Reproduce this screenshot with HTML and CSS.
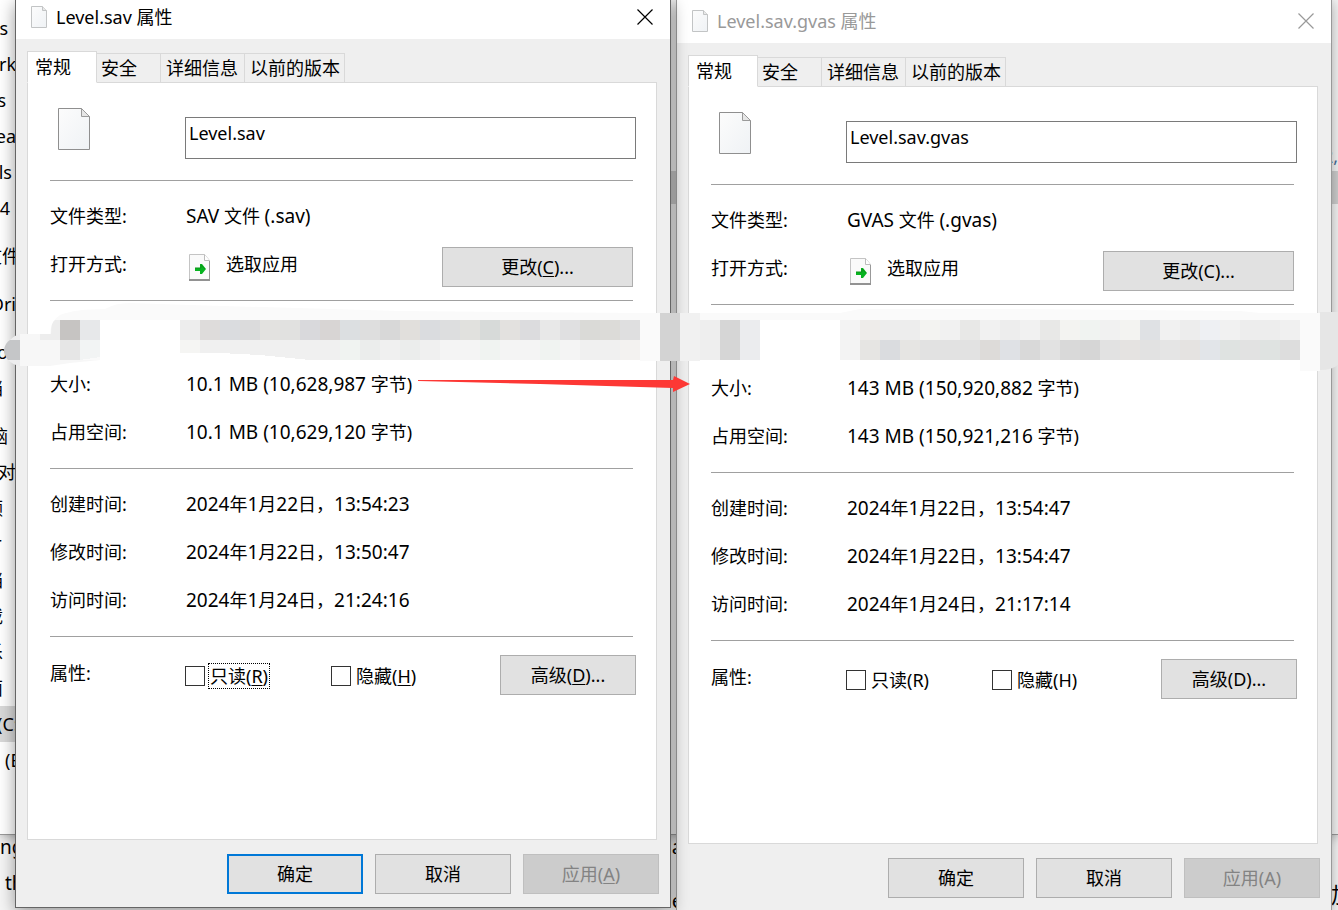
FILE: index.html
```html
<!DOCTYPE html>
<html lang="zh-CN">
<head>
<meta charset="utf-8">
<title>Level.sav 属性</title>
<link rel="stylesheet" href="styles.css">
</head>
<body>
<svg class="defs" aria-hidden="true">
  <defs>
    <linearGradient id="paper" x1="0" y1="0" x2="1" y2="1"><stop offset="0" stop-color="#fcfcfc"/><stop offset="1" stop-color="#eff2f5"/></linearGradient>
    <symbol id="file-small" viewBox="0 0 16 22"><path d="M.5.5H11.500L15.500 4.500V21.500H.5Z" fill="url(#paper)" stroke="#c2c4c5"/><path d="M11.500.5V4.500H15.500" fill="#e8e8e8" stroke="#c2c4c5"/></symbol>
    <symbol id="file-large" viewBox="0 0 32 42"><path d="M.5.5H23.500L31.500 8.500V41.500H.5Z" fill="url(#paper)" stroke="#8f8f8f"/><path d="M23.500.5V8.500H31.500Z" fill="#e6e6e6" stroke="#9a9a9a"/></symbol>
    <symbol id="file-open" viewBox="0 0 22 28"><path d="M.5.5H15.500L20.500 6.500V26.500H.5Z" fill="#fafafa" stroke="#c4c4c4"/><path d="M15.500.5V6.500H20.500" fill="#fff" stroke="#bcbcbc"/><path d="M20.500 7V26" stroke="#999"/><path d="M0 26H21" stroke="#929292" stroke-width="2"/><path d="M6 14H11V10H13L17 15L13 20H11V17H6Z" fill="#06b31f"/><path d="M6 14H12V11L16 15" fill="none" stroke="#0a9418"/></symbol>
    <symbol id="close" viewBox="0 0 16 16"><path d="M.5.5L15.500 15.500M15.500.5L.5 15.500" fill="none" stroke="currentColor" stroke-width="1.200"/></symbol>
  </defs>
</svg>
<div class="desktop">
  <div class="behind">
    <div class="explorer">
      <ul class="tree">
        <li class="end-8">s</li><li class="end-16">rk</li><li class="end-6">s</li><li class="end-16">ea</li><li class="end-12">ls</li><li class="end-10">4</li>
        <li class="end-20 gap">文件</li><li class="end-16 gap">Dri</li><li class="end-8 gap">o</li><li class="end-3">档</li>
        <li class="end-8 gap">脑</li><li class="end-34">对象</li><li class="end-3">频</li><li class="end-3">片</li><li class="end-3">档</li><li class="end-3">载</li><li class="end-3">乐</li><li class="end-3">面</li>
        <li class="drive">(C:)</li><li class="drive-next">(E:)</li>
      </ul>
      <div class="scroll-thumb"></div>
      <span class="edge-mark">2,</span>
    </div>
    <div class="page">
      <div class="page-left"><span class="ng">ng</span><span class="th">th</span></div>
      <div class="page-mid"><span>a</span><span>e</span></div>
      <div class="page-right"><span>加</span></div>
    </div>
  </div>

  <section class="window active">
    <header class="titlebar">
      <svg class="title-icon"><use href="#file-small"/></svg>
      <h1>Level.sav 属性</h1>
      <button class="close" aria-label="关闭"><svg><use href="#close"/></svg></button>
    </header>
    <nav class="tabs"><button class="tab current">常规</button><button class="tab second">安全</button><button class="tab third">详细信息</button><button class="tab fourth">以前的版本</button></nav>
    <div class="panel">
      <div class="name-row"><svg class="file-icon"><use href="#file-large"/></svg><input class="name" type="text" value="Level.sav" aria-label="文件名"></div>
      <dl class="group">
        <div class="row"><dt>文件类型:</dt><dd><span class="lat">SAV</span> 文件 <span class="lat">(.sav)</span></dd></div>
        <div class="row"><dt>打开方式:</dt><dd class="opener"><svg class="open-icon"><use href="#file-open"/></svg><span>选取应用</span><button class="btn change">更改(<u>C</u>)...</button></dd></div>
      </dl>
      <dl class="group">
        <div class="row"></div>
        <div class="row"><dt>大小:</dt><dd><span class="lat">10.1 MB (10,628,987</span> 字节)</dd></div>
        <div class="row"><dt>占用空间:</dt><dd><span class="lat">10.1 MB (10,629,120</span> 字节)</dd></div>
      </dl>
      <dl class="group">
        <div class="row"><dt>创建时间:</dt><dd><span class="lat">2024</span>年<span class="lat">1</span>月<span class="lat">22</span>日，<span class="lat">13:54:23</span></dd></div>
        <div class="row"><dt>修改时间:</dt><dd><span class="lat">2024</span>年<span class="lat">1</span>月<span class="lat">22</span>日，<span class="lat">13:50:47</span></dd></div>
        <div class="row"><dt>访问时间:</dt><dd><span class="lat">2024</span>年<span class="lat">1</span>月<span class="lat">24</span>日，<span class="lat">21:24:16</span></dd></div>
      </dl>
      <div class="attributes">
        <span class="attr-title">属性:</span>
        <label class="check"><input type="checkbox"><span class="focused">只读(<u>R</u>)</span></label>
        <label class="check"><input type="checkbox"><span>隐藏(<u>H</u>)</span></label>
        <button class="btn advanced">高级(<u>D</u>)...</button>
      </div>
    </div>
    <footer class="actions"><button class="btn primary">确定</button><button class="btn">取消</button><button class="btn" disabled>应用(<u>A</u>)</button></footer>
  </section>

  <section class="window inactive">
    <header class="titlebar">
      <svg class="title-icon"><use href="#file-small"/></svg>
      <h1>Level.sav.gvas 属性</h1>
      <button class="close" aria-label="关闭"><svg><use href="#close"/></svg></button>
    </header>
    <nav class="tabs"><button class="tab current">常规</button><button class="tab second">安全</button><button class="tab third">详细信息</button><button class="tab fourth">以前的版本</button></nav>
    <div class="panel">
      <div class="name-row"><svg class="file-icon"><use href="#file-large"/></svg><input class="name" type="text" value="Level.sav.gvas" aria-label="文件名"></div>
      <dl class="group">
        <div class="row"><dt>文件类型:</dt><dd><span class="lat">GVAS</span> 文件 <span class="lat">(.gvas)</span></dd></div>
        <div class="row"><dt>打开方式:</dt><dd class="opener"><svg class="open-icon"><use href="#file-open"/></svg><span>选取应用</span><button class="btn change">更改(C)...</button></dd></div>
      </dl>
      <dl class="group">
        <div class="row"></div>
        <div class="row"><dt>大小:</dt><dd><span class="lat">143 MB (150,920,882</span> 字节)</dd></div>
        <div class="row"><dt>占用空间:</dt><dd><span class="lat">143 MB (150,921,216</span> 字节)</dd></div>
      </dl>
      <dl class="group">
        <div class="row"><dt>创建时间:</dt><dd><span class="lat">2024</span>年<span class="lat">1</span>月<span class="lat">22</span>日，<span class="lat">13:54:47</span></dd></div>
        <div class="row"><dt>修改时间:</dt><dd><span class="lat">2024</span>年<span class="lat">1</span>月<span class="lat">22</span>日，<span class="lat">13:54:47</span></dd></div>
        <div class="row"><dt>访问时间:</dt><dd><span class="lat">2024</span>年<span class="lat">1</span>月<span class="lat">24</span>日，<span class="lat">21:17:14</span></dd></div>
      </dl>
      <div class="attributes">
        <span class="attr-title">属性:</span>
        <label class="check"><input type="checkbox"><span>只读(R)</span></label>
        <label class="check"><input type="checkbox"><span>隐藏(H)</span></label>
        <button class="btn advanced">高级(D)...</button>
      </div>
    </div>
    <footer class="actions"><button class="btn">确定</button><button class="btn">取消</button><button class="btn" disabled>应用(A)</button></footer>
  </section>

  <svg class="markup" viewBox="0 300 1338 100" preserveAspectRatio="none" aria-hidden="true">
    <path d="M50 334Q51 320 60 315Q75 309 105 309Q115 303 130 303L190 305L400 311L640 313H840L860 309H1010L1240 311L1260 313H1338V320H640V360H180V320H100V360H50Z" fill="#fafafa"/>
    <path d="M20 334H60V360H100Q75 362 50 366H20Z" fill="#f7f7f7"/>
    <path d="M20 340V360H8Q4 355 4 350Q5 343 10 340Z" fill="#c5c6c8"/>
    <path d="M10 340Q15 335 20 334V340ZM8 360H20V366Q13 365 8 360Z" fill="#ededee"/>
    <path d="M51 334Q51 322 55 320H60V340H40V334Z" fill="#ededed"/>
    <g shape-rendering="crispEdges">
      <path d="M60 320h20v20h-20z" fill="#c6c4c2"/><path d="M80 320h20v20h-20z" fill="#e7e8ea"/><path d="M60 340h20v20h-20z" fill="#e6e6e6"/><path d="M80 340h20v17l-20 3z" fill="#f2f4f4"/>
      <path d="M100 320h80v40h-80z" fill="#fff"/>
      <path d="M180 320h20v20h-20z" fill="#ededed"/><path d="M200 320h20v20h-20z" fill="#dedcdb"/><path d="M220 320h20v20h-20z" fill="#dadcdf"/><path d="M240 320h20v20h-20z" fill="#dbdbdc"/><path d="M260 320h20v20h-20z" fill="#e3e2e0"/><path d="M280 320h20v20h-20z" fill="#e1e1e0"/><path d="M300 320h20v20h-20z" fill="#d9d9dc"/><path d="M320 320h20v20h-20z" fill="#d8d5d4"/><path d="M340 320h20v20h-20z" fill="#dcdfe1"/><path d="M360 320h20v20h-20z" fill="#dedede"/><path d="M380 320h20v20h-20z" fill="#d8d8d8"/><path d="M400 320h20v20h-20z" fill="#e1dfdc"/><path d="M420 320h20v20h-20z" fill="#dadcdf"/><path d="M440 320h20v20h-20z" fill="#dddedf"/><path d="M460 320h20v20h-20z" fill="#e1e1de"/><path d="M480 320h20v20h-20z" fill="#d7dad9"/><path d="M500 320h20v20h-20z" fill="#e3e1df"/><path d="M520 320h20v20h-20z" fill="#dcdcde"/><path d="M540 320h20v20h-20z" fill="#e8e8e8"/><path d="M560 320h20v20h-20z" fill="#e0e0e1"/><path d="M580 320h20v20h-20z" fill="#dadad7"/><path d="M600 320h20v20h-20z" fill="#dcdbd8"/><path d="M620 320h20v20h-20z" fill="#dfdfe0"/>
      <path d="M180 340h460v20H310L260 355L220 353H180Z" fill="#f0f0f0"/><path d="M180 340h20v13h-20z" fill="#f5f5f3"/><path d="M340 340h20v20h-20zM480 340h20v20h-20zM540 340h20v20h-20z" fill="#f0f3f1"/><path d="M360 340h20v20h-20zM400 340h20v20h-20z" fill="#ebedec"/><path d="M440 340h40v20h-40zM500 340h40v20h-40zM560 340h20v20h-20z" fill="#f4f4f4"/><path d="M620 340h20v20h-20z" fill="#f3f2f0"/>
      <path d="M180 353L220 353L260 355L310 360H180Z" fill="#fff"/>
      <path d="M640 313h20v48h-20z" fill="#fafafa"/><path d="M660 313h20v48h-20z" fill="#d3d3d3"/><path d="M680 313h20v48h-20z" fill="#f1f1f1"/><path d="M700 320h20v40h-20z" fill="#eee"/><path d="M720 320h20v40h-20z" fill="#d6d6d6"/><path d="M740 320h20v40h-20z" fill="#ebecee"/><path d="M760 320h80v40h-80z" fill="#fff"/>
      <path d="M840 320h20v40h-20z" fill="#f3f3f3"/><path d="M860 320h440v20H860z" fill="#ededed"/><path d="M860 340h440v20H860z" fill="#e2e2e2"/>
      <path d="M860 320h20v20h-20z" fill="#eeecea"/><path d="M920 320h20v20h-20zM1060 320h20v20h-20zM1120 320h20v20h-20z" fill="#f3f3f1"/><path d="M940 320h20v20h-20zM980 320h20v20h-20zM1020 320h20v20h-20zM1100 320h20v20h-20zM1160 320h20v20h-20zM1220 320h20v20h-20z" fill="#f1f1f1"/><path d="M960 320h20v20h-20zM1040 320h20v20h-20z" fill="#e8e8e7"/><path d="M1080 320h20v20h-20z" fill="#f0f3f1"/><path d="M1140 320h20v20h-20z" fill="#dfe1e4"/><path d="M1200 320h20v20h-20z" fill="#eef0f3"/><path d="M1280 320h20v20h-20z" fill="#f0f0f0"/>
      <path d="M860 340h20v20h-20zM900 340h20v20h-20z" fill="#e6e5e3"/><path d="M880 340h20v20h-20z" fill="#dadcdf"/><path d="M980 340h20v20h-20z" fill="#dddbd9"/><path d="M1000 340h20v20h-20z" fill="#dfe1e5"/><path d="M1020 340h20v20h-20zM1060 340h20v20h-20z" fill="#d9d9d9"/><path d="M1080 340h20v20h-20z" fill="#d6d6d6"/><path d="M1120 340h20v20h-20zM1180 340h20v20h-20z" fill="#e5e3e1"/><path d="M1160 340h20v20h-20z" fill="#e5e5e5"/><path d="M1200 340h20v20h-20z" fill="#e2e5e9"/><path d="M1220 340h20v20h-20zM1260 340h20v20h-20z" fill="#dfe3e1"/><path d="M1280 340h20v20h-20z" fill="#ddd"/>
      <path d="M1300 313h20v58h-20z" fill="#fafafa"/>
    </g>
    <path d="M1320 312H1338V365Q1332 370 1320 370Z" fill="#e6e6e6"/>
    <path d="M418 380L673 380L674 376L690 384L673 392V388L540 384L418 381Z" fill="#fd3835"/>
  </svg>
</div>
</body>
</html>
```
FILE: styles.css
```css
* { box-sizing: border-box; }
body {
  margin: 0;
  color: #000;
  background: #fff;
  font: 18px/24px "Noto Sans", "Noto Sans CJK SC", sans-serif;
}
h1, dl, dd, ul { margin: 0; padding: 0; font: inherit; }
button, input { font: inherit; color: inherit; }
.defs { position: absolute; width: 0; height: 0; }
.lat { font-size: 19px; }

.desktop {
  position: relative;
  height: 100vh;
  min-height: 880px;
  overflow: hidden;
  display: grid;
  grid-template-columns: minmax(0, 1fr) minmax(0, 1fr);
  gap: 5px;
  padding: 0 6px 0 15px;
  align-items: start;
}

/* Windows lying behind the two dialogs */
.behind { position: absolute; inset: 0; display: flex; flex-direction: column; background: #f5f5f5; }
.explorer {
  position: relative;
  flex: none;
  height: 835px;
  background: linear-gradient(90deg, #fff 50%, #f3f3f3 50%);
  border-bottom: 1px solid #999;
  box-shadow: 0 0 12px rgba(0, 0, 0, .4);
}
.tree { list-style: none; padding-top: 10px; }
.tree li { display: flex; justify-content: flex-end; align-items: center; height: 36px; white-space: nowrap; }
.tree .gap { margin-top: 12px; }
.tree .end-3 { width: 3px; }
.tree .end-6 { width: 6px; }
.tree .end-8 { width: 8px; }
.tree .end-10 { width: 10px; }
.tree .end-12 { width: 12px; }
.tree .end-16 { width: 16px; }
.tree .end-20 { width: 20px; }
.tree .end-34 { width: 34px; }
.tree .drive { justify-content: flex-end; width: 24px; background: #d9d9d9; }
.tree .drive-next { justify-content: flex-start; padding-left: 5px; }
.scroll-thumb { position: absolute; left: 50%; right: 0; top: 171px; height: 33px; background: #cdcdcd; }
.edge-mark { position: absolute; right: 0; top: 144px; color: #456b95; }
.page { flex: 1; display: flex; justify-content: space-between; min-height: 0; font-size: 19px; }
.page-left { display: flex; flex-direction: column; gap: 12px; width: 24px; }
.page-left .th { padding-left: 5px; }
.page-mid { display: flex; flex-direction: column; gap: 30px; font-size: 20px; }
.page-right { width: 7px; padding-top: 47px; font-size: 22px; }

/* Property dialogs */
.window {
  position: relative;
  display: flex;
  flex-direction: column;
  height: calc(100vh - 2px);
  min-height: 860px;
  background: #efefef;
  border: 1px solid #656565;
  border-top: 0;
}
.active { z-index: 2; box-shadow: 0 4px 16px rgba(0, 0, 0, .4); }
.inactive { z-index: 1; height: calc(100vh + 2px); border-color: #999; box-shadow: 0 2px 12px rgba(0, 0, 0, .32); }
.titlebar { display: flex; align-items: center; height: 39px; padding: 0 17px 6px 15px; background: #fff; }
.inactive .titlebar { height: 43px; padding-top: 4px; color: #999; }
.title-icon { width: 16px; height: 22px; margin-right: 9px; }
.titlebar h1 { flex: 1; white-space: nowrap; }
.close { display: flex; padding: 0; border: 0; background: none; }
.close svg { width: 16px; height: 16px; }

.tabs { display: flex; align-items: flex-end; height: 44px; padding-left: 11px; position: relative; z-index: 1; }
.tab {
  height: 30px;
  padding: 0 0 0 5px;
  border: 1px solid #d9d9d9;
  border-left: 0;
  background: #efefef;
  text-align: left;
  white-space: nowrap;
}
.tab.current { width: 70px; height: 32px; padding-left: 7px; border-left: 1px solid #d9d9d9; border-bottom-color: #fff; background: #fff; }
.tab.second { width: 64px; padding-left: 4px; }
.tab.third { width: 84px; }
.tab.fourth { width: 100px; }
.panel {
  flex: 1;
  margin: -1px 13px 0 11px;
  padding: 0 20px 0 22px;
  border: 1px solid #d9d9d9;
  background: #fff;
}
.name-row { display: flex; align-items: flex-start; height: 97px; padding: 25px 0 0 8px; }
.file-icon { width: 32px; height: 42px; margin-right: 95px; flex: none; }
.name { flex: 1; min-width: 0; height: 42px; margin-top: 9px; padding: 0 3px 11px; border: 1px solid #7a7a7a; background: #fff; outline: 0; }
.group { margin-right: 3px; padding: 11px 0 12px; border-top: 1px solid #a0a0a0; }
.group:last-of-type { border-bottom: 1px solid #a0a0a0; }
.row { display: grid; grid-template-columns: 136px minmax(0, 1fr); align-items: center; height: 48px; white-space: nowrap; }
.opener { display: flex; align-items: center; }
.open-icon { width: 22px; height: 28px; margin: 8px 15px 0 3px; }
.btn { height: 40px; padding: 0; border: 1px solid #adadad; background: #e1e1e1; text-align: center; }
.btn u, .check u { text-underline-offset: 2px; }
.change { width: 191px; margin: 6px 0 0 auto; }
.attributes { display: flex; align-items: center; padding-top: 18px; }
.attr-title { width: 135px; padding-bottom: 4px; }
.check { display: flex; align-items: center; width: 146px; padding-top: 2px; white-space: nowrap; }
.check input { appearance: none; width: 20px; height: 20px; margin: 0 4px 0 0; border: 1px solid #333; background: #fff; }
.check span { padding: 0 1px; }
.focused { outline: 1px dotted #000; }
.advanced { width: 136px; margin-left: auto; }
.actions { display: flex; justify-content: flex-end; gap: 12px; padding: 14px 11px 13px; }
.actions .btn { width: 136px; }
.btn.primary { border: 2px solid #0078d7; }
.btn:disabled { border-color: #bfbfbf; background: #ccc; color: #838383; }

/* Redaction mosaic and arrow drawn over both dialogs */
.markup { position: absolute; left: 0; top: 300px; z-index: 3; width: 100%; height: 100px; pointer-events: none; }
```
